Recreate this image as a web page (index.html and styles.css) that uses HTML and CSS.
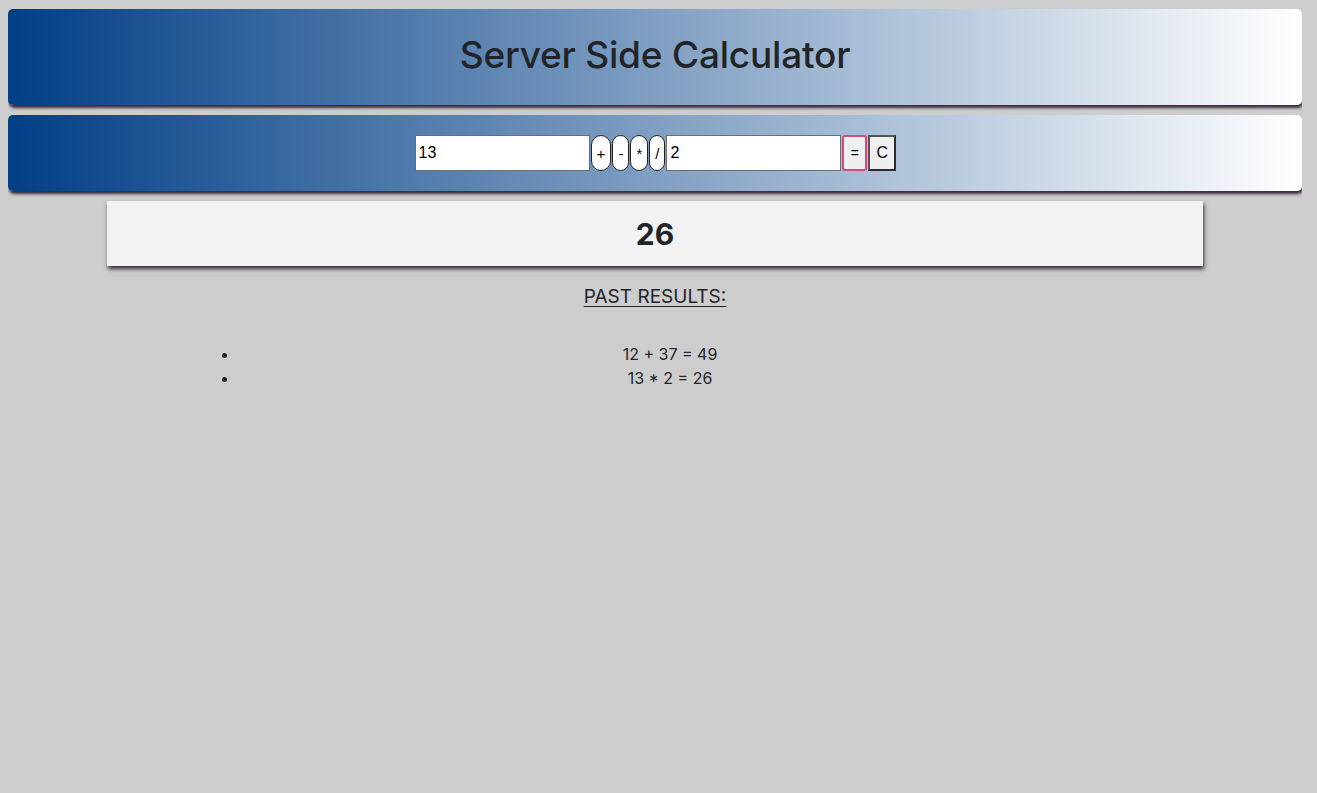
FILE: index.html
```html
<!DOCTYPE html>
<html>
<head>
<meta charset="utf-8">
<title>Server Side Calculator</title>
<link rel="stylesheet" href="styles.css">
</head>
<body>
<header class="bar title-bar">
  <h1 class="title">Server Side Calculator</h1>
</header>
<section class="bar calc-bar">
  <form class="calc-form">
    <input class="num-input" type="text" value="13">
    <button type="button" class="op-btn">+</button>
    <button type="button" class="op-btn">-</button>
    <button type="button" class="op-btn">*</button>
    <button type="button" class="op-btn">/</button>
    <input class="num-input" type="text" value="2">
    <button type="button" class="eq-btn">=</button>
    <button type="button" class="clear-btn">C</button>
  </form>
</section>
<section class="result">
  <h2 class="result-value">26</h2>
</section>
<section class="history">
  <h3 class="history-title">PAST RESULTS:</h3>
  <ul class="history-list">
    <li>12 + 37 = 49</li>
    <li>13 * 2 = 26</li>
  </ul>
</section>
</body>
</html>
```
FILE: styles.css
```css
html, body {
  background: #cdcdcd;
}
body {
  margin: 9px 15px 8px 8px;
  font-family: Inter, "Noto Sans", sans-serif;
  color: #212529;
}
.bar {
  background: linear-gradient(to right, #013f86 0%, #ffffff 100%);
  border-radius: 5px;
  box-shadow: 1px 3px 3px #3a2a3c;
  display: flex;
  align-items: center;
  justify-content: center;
}
.title-bar {
  height: 96px;
  box-sizing: border-box;
  padding-bottom: 6px;
}
.title {
  margin: 0;
  font-size: 37px;
  font-weight: 500;
  letter-spacing: -0.2px;
  color: #212529;
}
.calc-bar {
  margin-top: 10px;
  height: 76px;
}
.calc-form {
  display: flex;
  align-items: center;
  gap: 1px;
  margin-left: 1px;
}
.num-input {
  box-sizing: border-box;
  width: 175px;
  height: 36px;
  border: 1px solid #6e6e6e;
  padding: 1px 3px;
  font-family: "Liberation Sans", Arial, sans-serif;
  font-size: 16px;
  background: #fff;
  color: #000;
  margin: 0;
}
.op-btn {
  box-sizing: border-box;
  height: 36px;
  min-width: 16px;
  padding: 0 5px;
  border: 1px solid #222;
  border-radius: 11px;
  background: #fff;
  font-family: "Liberation Sans", Arial, sans-serif;
  font-size: 15px;
  color: #000;
  margin: 0;
}
.eq-btn {
  box-sizing: border-box;
  height: 36px;
  width: 25px;
  padding: 0;
  border: 2px solid #d64a82;
  border-radius: 3px;
  background: #efefef;
  font-family: "Liberation Sans", Arial, sans-serif;
  font-size: 14px;
  color: #000;
  margin: 0;
}
.clear-btn {
  box-sizing: border-box;
  height: 36px;
  width: 28px;
  padding: 0;
  border: 2px solid #2b2b2b;
  border-top-color: #555;
  border-left-color: #555;
  background: #efefef;
  font-family: "Liberation Sans", Arial, sans-serif;
  font-size: 16px;
  color: #000;
  margin: 0;
}
.result {
  width: 1096px;
  margin: 10px auto 0;
  height: 65px;
  background: #f2f2f2;
  box-shadow: 1px 3px 4px #3a2a3c;
  display: flex;
  align-items: center;
  justify-content: center;
}
.result-value {
  margin: 0;
  font-size: 30px;
  font-weight: 700;
}
.history {
  text-align: center;
}
.history-title {
  margin: 20px 0 0;
  font-size: 19px;
  font-weight: 400;
  line-height: 22px;
  text-decoration: underline;
  text-underline-offset: 3px;
}
.history-list {
  width: 862px;
  margin: 34px 0 0 191px;
  padding-left: 40px;
  font-size: 16px;
  line-height: 24px;
  text-align: center;
}
```
